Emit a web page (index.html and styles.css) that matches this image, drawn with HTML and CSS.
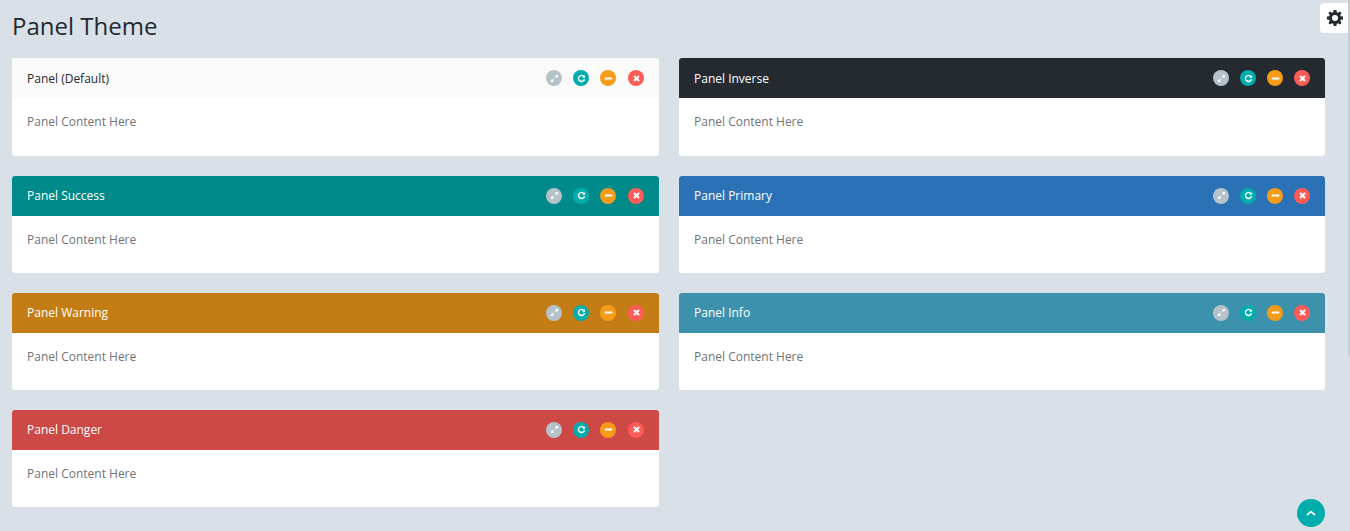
FILE: index.html
```html
<!DOCTYPE html>
<html lang="en">
<head>
    <meta charset="UTF-8">
    <title>Panel Theme</title>
    <link rel="stylesheet" href="styles.css">
</head>
<body>
    <svg class="icon-defs" width="0" height="0">
        <symbol id="i-expand" viewBox="0 0 10 10">
            <path d="M5.8 1H9v3.2L7.9 3.1 6.4 4.6 5.4 3.6 6.9 2.1zM4.6 6.4L3.1 7.9 4.2 9H1V5.8l1.1 1.1 1.5-1.5z" fill="currentColor"/>
        </symbol>
        <symbol id="i-redo" viewBox="0 0 10 10">
            <path d="M9.1 5.7A4.1 4.1 0 1 1 7.9 2.1L9 1v3.3H5.7l1-1A2.4 2.4 0 1 0 7.2 5.7z" fill="currentColor"/>
        </symbol>
        <symbol id="i-minus" viewBox="0 0 10 10">
            <rect x="0.8" y="3.8" width="8.4" height="2.4" rx="0.5" fill="currentColor"/>
        </symbol>
        <symbol id="i-times" viewBox="0 0 10 10">
            <path d="M3 1.4L5 3.4l2-2L8.6 3l-2 2 2 2L7 8.6l-2-2-2 2L1.4 7l2-2-2-2z" fill="currentColor"/>
        </symbol>
    </svg>

    <div class="content">
        <h1 class="page-header">Panel Theme</h1>

        <div class="panel-grid">
            <div class="panel">
                <div class="panel-heading heading-default">
                    <h4 class="panel-title">Panel (Default)</h4>
                    <div class="panel-btns">
                        <span class="btn-icon btn-grey"><svg><use href="#i-expand"/></svg></span>
                        <span class="btn-icon btn-teal"><svg><use href="#i-redo"/></svg></span>
                        <span class="btn-icon btn-orange"><svg><use href="#i-minus"/></svg></span>
                        <span class="btn-icon btn-red"><svg><use href="#i-times"/></svg></span>
                    </div>
                </div>
                <div class="panel-body"><p>Panel Content Here</p></div>
            </div>

            <div class="panel">
                <div class="panel-heading heading-inverse">
                    <h4 class="panel-title">Panel Inverse</h4>
                    <div class="panel-btns">
                        <span class="btn-icon btn-grey"><svg><use href="#i-expand"/></svg></span>
                        <span class="btn-icon btn-teal"><svg><use href="#i-redo"/></svg></span>
                        <span class="btn-icon btn-orange"><svg><use href="#i-minus"/></svg></span>
                        <span class="btn-icon btn-red"><svg><use href="#i-times"/></svg></span>
                    </div>
                </div>
                <div class="panel-body"><p>Panel Content Here</p></div>
            </div>

            <div class="panel">
                <div class="panel-heading heading-success">
                    <h4 class="panel-title">Panel Success</h4>
                    <div class="panel-btns">
                        <span class="btn-icon btn-grey"><svg><use href="#i-expand"/></svg></span>
                        <span class="btn-icon btn-teal"><svg><use href="#i-redo"/></svg></span>
                        <span class="btn-icon btn-orange"><svg><use href="#i-minus"/></svg></span>
                        <span class="btn-icon btn-red"><svg><use href="#i-times"/></svg></span>
                    </div>
                </div>
                <div class="panel-body"><p>Panel Content Here</p></div>
            </div>

            <div class="panel">
                <div class="panel-heading heading-primary">
                    <h4 class="panel-title">Panel Primary</h4>
                    <div class="panel-btns">
                        <span class="btn-icon btn-grey"><svg><use href="#i-expand"/></svg></span>
                        <span class="btn-icon btn-teal"><svg><use href="#i-redo"/></svg></span>
                        <span class="btn-icon btn-orange"><svg><use href="#i-minus"/></svg></span>
                        <span class="btn-icon btn-red"><svg><use href="#i-times"/></svg></span>
                    </div>
                </div>
                <div class="panel-body"><p>Panel Content Here</p></div>
            </div>

            <div class="panel">
                <div class="panel-heading heading-warning">
                    <h4 class="panel-title">Panel Warning</h4>
                    <div class="panel-btns">
                        <span class="btn-icon btn-grey"><svg><use href="#i-expand"/></svg></span>
                        <span class="btn-icon btn-teal"><svg><use href="#i-redo"/></svg></span>
                        <span class="btn-icon btn-orange"><svg><use href="#i-minus"/></svg></span>
                        <span class="btn-icon btn-red"><svg><use href="#i-times"/></svg></span>
                    </div>
                </div>
                <div class="panel-body"><p>Panel Content Here</p></div>
            </div>

            <div class="panel">
                <div class="panel-heading heading-info">
                    <h4 class="panel-title">Panel Info</h4>
                    <div class="panel-btns">
                        <span class="btn-icon btn-grey"><svg><use href="#i-expand"/></svg></span>
                        <span class="btn-icon btn-teal"><svg><use href="#i-redo"/></svg></span>
                        <span class="btn-icon btn-orange"><svg><use href="#i-minus"/></svg></span>
                        <span class="btn-icon btn-red"><svg><use href="#i-times"/></svg></span>
                    </div>
                </div>
                <div class="panel-body"><p>Panel Content Here</p></div>
            </div>

            <div class="panel">
                <div class="panel-heading heading-danger">
                    <h4 class="panel-title">Panel Danger</h4>
                    <div class="panel-btns">
                        <span class="btn-icon btn-grey"><svg><use href="#i-expand"/></svg></span>
                        <span class="btn-icon btn-teal"><svg><use href="#i-redo"/></svg></span>
                        <span class="btn-icon btn-orange"><svg><use href="#i-minus"/></svg></span>
                        <span class="btn-icon btn-red"><svg><use href="#i-times"/></svg></span>
                    </div>
                </div>
                <div class="panel-body"><p>Panel Content Here</p></div>
            </div>
        </div>
    </div>

    <!-- Floating items -->
    <div class="theme-toggle">
        <svg viewBox="0 0 16 16" width="16" height="16"><path fill-rule="evenodd" d="M6.6 0H9.4L9.8 2.2 11 2.7 12.9 1.4 14.6 3.1 13.3 5 13.8 6.2 16 6.6V9.4L13.8 9.8 13.3 11 14.6 12.9 12.9 14.6 11 13.3 9.8 13.8 9.4 16H6.6L6.2 13.8 5 13.3 3.1 14.6 1.4 12.9 2.7 11 2.2 9.8 0 9.4V6.6L2.2 6.2 2.7 5 1.4 3.1 3.1 1.4 5 2.7 6.2 2.2zM8 5a3 3 0 1 0 0 6 3 3 0 0 0 0-6z" fill="#242a30"/></svg>
    </div>
    <div class="scroll-top">
        <svg viewBox="0 0 10 6" width="10" height="6"><path d="M1 5l4-3.4L9 5" fill="none" stroke="#fff" stroke-width="1.7"/></svg>
    </div>
    <div class="scroll-thumb"></div>
</body>
</html>
```

FILE: styles.css
```css
html, body {
    height: 100%;
    overflow: hidden;
}
body {
    margin: 0;
    background: #d9e0e7;
    color: #707478;
    font-family: "Open Sans", sans-serif;
    font-size: 12px;
    line-height: 1.42857;
}
.icon-defs {
    position: absolute;
}
.content {
    padding: 10px 25px 0 12px;
}
.page-header {
    margin: 0 0 20px;
    font-size: 24px;
    font-weight: 400;
    line-height: 32px;
    color: #242a30;
    height: 28.4px;
}

.panel-grid {
    display: grid;
    grid-template-columns: 647px 646px;
    column-gap: 20px;
    row-gap: 20px;
}
.panel {
    background: #fff;
    border-radius: 3px;
    overflow: hidden;
}
.panel-heading {
    display: flex;
    justify-content: space-between;
    align-items: center;
    height: 40px;
    padding: 0 15px;
    box-sizing: border-box;
    color: #fff;
}
.panel-title {
    margin: 0;
    font-size: 12px;
    font-weight: 400;
    line-height: 20px;
    padding-top: 1px;
}
.panel-body {
    padding: 15px;
}
.panel-body p {
    margin: 0 0 10px;
}

.heading-default { background: #fafafa; color: #242a30; }
.heading-inverse { background: #242a30; }
.heading-success { background: #008a8a; }
.heading-primary { background: #2a72b5; }
.heading-warning { background: #c47d15; }
.heading-info { background: #3c92ad; }
.heading-danger { background: #cc4946; }

.panel-btns {
    display: flex;
    gap: 11px;
}
.btn-icon {
    display: flex;
    align-items: center;
    justify-content: center;
    width: 16px;
    height: 16px;
    border-radius: 50%;
    color: #fff;
}
.btn-icon svg {
    width: 9px;
    height: 9px;
}
.btn-grey { background: #b6c2c9; }
.btn-teal { background: #00acac; }
.btn-orange { background: #f59c1a; }
.btn-red { background: #ff5b57; }
.panel:nth-child(odd) .btn-red { margin-left: 1px; }

.theme-toggle {
    position: absolute;
    top: 3px;
    right: 0;
    width: 30px;
    height: 30px;
    display: flex;
    align-items: center;
    justify-content: center;
    background: #fff;
    border-radius: 4px 0 0 4px;
    box-sizing: border-box;
}
.scroll-top {
    position: absolute;
    top: 499px;
    left: 1297px;
    width: 28px;
    height: 28px;
    display: flex;
    align-items: center;
    justify-content: center;
    background: #00acac;
    border-radius: 50%;
}
.scroll-thumb {
    position: absolute;
    top: 0;
    right: 0;
    width: 2px;
    height: 356px;
    background: #c4ccd4;
}
```
